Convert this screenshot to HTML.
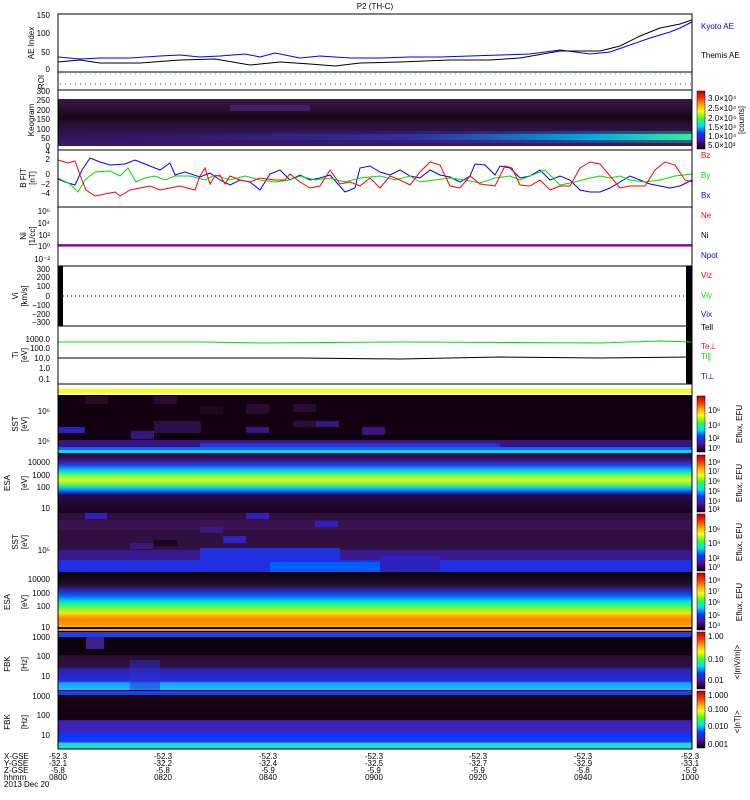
<!DOCTYPE html>
<html><head><meta charset="utf-8"><style>
html,body{margin:0;padding:0;background:#fff;width:750px;height:800px;overflow:hidden}
svg{display:block}
text{font-family:"Liberation Sans",sans-serif;font-size:8px}
</style></head><body>
<svg width="750" height="800" viewBox="0 0 750 800" xmlns="http://www.w3.org/2000/svg">
<defs>
<linearGradient id="rb" x1="0" y1="0" x2="0" y2="1">
<stop offset="0" stop-color="#c00000"/><stop offset="0.12" stop-color="#ff3000"/><stop offset="0.25" stop-color="#ffb000"/><stop offset="0.35" stop-color="#ffff00"/><stop offset="0.48" stop-color="#30ff30"/><stop offset="0.6" stop-color="#00e0ff"/><stop offset="0.72" stop-color="#0040ff"/><stop offset="0.85" stop-color="#5010a0"/><stop offset="1" stop-color="#100010"/>
</linearGradient>
<linearGradient id="esai" x1="0" y1="0" x2="0" y2="1">
<stop offset="0" stop-color="#200830"/><stop offset="0.1" stop-color="#3a1070"/><stop offset="0.2" stop-color="#2040e0"/><stop offset="0.28" stop-color="#00c0ff"/><stop offset="0.36" stop-color="#50ff60"/><stop offset="0.45" stop-color="#f0f020"/><stop offset="0.52" stop-color="#60ff50"/><stop offset="0.6" stop-color="#00b0ff"/><stop offset="0.66" stop-color="#2030d0"/><stop offset="0.72" stop-color="#301060"/><stop offset="1" stop-color="#180420"/>
</linearGradient>
<linearGradient id="esae" x1="0" y1="0" x2="0" y2="1">
<stop offset="0" stop-color="#080008"/><stop offset="0.22" stop-color="#201030"/><stop offset="0.3" stop-color="#3020a0"/><stop offset="0.4" stop-color="#0060ff"/><stop offset="0.5" stop-color="#00e0e0"/><stop offset="0.6" stop-color="#60ff40"/><stop offset="0.7" stop-color="#ffe000"/><stop offset="0.8" stop-color="#ff8000"/><stop offset="0.9" stop-color="#ffa000"/><stop offset="0.95" stop-color="#ffd000"/><stop offset="1" stop-color="#ff8000"/>
</linearGradient>
<linearGradient id="keo" x1="0" y1="0" x2="0" y2="1">
<stop offset="0" stop-color="#3a1848"/><stop offset="0.4" stop-color="#1a0818"/><stop offset="0.55" stop-color="#2a1038"/><stop offset="1" stop-color="#3a1870"/>
</linearGradient>
<linearGradient id="keob" x1="0" y1="0" x2="1" y2="0">
<stop offset="0" stop-color="#3020a0" stop-opacity="0"/><stop offset="0.55" stop-color="#3040d0" stop-opacity="0.5"/><stop offset="0.85" stop-color="#00b0e0"/><stop offset="1" stop-color="#30f0a0"/>
</linearGradient>
<linearGradient id="fbk1" x1="0" y1="0" x2="0" y2="1">
<stop offset="0" stop-color="#080008"/><stop offset="0.4" stop-color="#100010"/><stop offset="0.42" stop-color="#2a1030"/><stop offset="0.6" stop-color="#301040"/><stop offset="0.65" stop-color="#3020b0"/><stop offset="0.85" stop-color="#2030e0"/><stop offset="0.88" stop-color="#10a0ff"/><stop offset="1" stop-color="#20c0ff"/>
</linearGradient>
<linearGradient id="fbk2" x1="0" y1="0" x2="0" y2="1">
<stop offset="0" stop-color="#1c0818"/><stop offset="0.5" stop-color="#100010"/><stop offset="0.52" stop-color="#4020b0"/><stop offset="0.7" stop-color="#4020c0"/><stop offset="0.72" stop-color="#1030f0"/><stop offset="0.88" stop-color="#1040f0"/><stop offset="0.9" stop-color="#20d0e0"/><stop offset="1" stop-color="#30e0c0"/>
</linearGradient>
</defs>

<text x="375" y="9" text-anchor="middle" font-size="9">P2 (TH-C)</text>

<!-- AE panel -->
<rect x="58" y="14" width="634" height="58" fill="#fff" stroke="#000" stroke-width="1"/>
<polyline fill="none" stroke="#00f" stroke-width="1" points="58,57 80,59 100,58 130,58 160,56 180,55 200,57 220,56 245,54 260,57 275,53 300,58 320,56 350,58 380,58 410,57 440,57 470,56 500,55 530,54 560,50 590,54 610,52 630,45 650,38 670,32 680,28 692,22"/>
<polyline fill="none" stroke="#000" stroke-width="1" points="58,62 80,60 100,63 140,63 180,60 215,59 250,65 280,62 310,64 335,66 360,63 400,62 450,60 490,60 520,58 560,51 600,51 620,46 640,36 660,28 680,24 692,20"/>
<text x="50" y="18" text-anchor="end">150</text><text x="50" y="36" text-anchor="end">100</text><text x="50" y="55" text-anchor="end">50</text><text x="50" y="72" text-anchor="end">0</text>
<text x="34" y="43" text-anchor="middle" transform="rotate(-90 34 43)">AE Index</text>
<text x="701" y="29" fill="#00f">Kyoto AE</text><text x="701" y="58">Themis AE</text>

<!-- ROI -->
<rect x="58" y="72" width="634" height="18" fill="#fff" stroke="#000"/>
<line x1="60" y1="74" x2="692" y2="74" stroke="#0dd" stroke-dasharray="1,4"/>
<line x1="60" y1="84" x2="692" y2="84" stroke="#f00" stroke-dasharray="1,4"/>
<text x="44" y="82" text-anchor="middle" transform="rotate(-90 44 82)">ROI</text>

<!-- Keogram -->
<rect x="58" y="90" width="634" height="60" fill="#fff" stroke="#000"/>
<rect x="58" y="99" width="634" height="47" fill="url(#keo)"/>
<rect x="58" y="134" width="634" height="6" fill="url(#keob)"/>
<rect x="58" y="131" width="634" height="12" fill="url(#keob)" opacity="0.35"/>
<rect x="230" y="105" width="80" height="6" fill="#5030a0" opacity="0.5"/>
<text x="50" y="94" text-anchor="end">300</text><text x="50" y="103" text-anchor="end">250</text><text x="50" y="113" text-anchor="end">200</text><text x="50" y="122" text-anchor="end">150</text><text x="50" y="132" text-anchor="end">100</text><text x="50" y="141" text-anchor="end">50</text><text x="50" y="149" text-anchor="end">0</text>
<text x="34" y="120" text-anchor="middle" transform="rotate(-90 34 120)">Keogram</text>
<rect x="697" y="91" width="8" height="58" fill="url(#rb)" stroke="#000" stroke-width="0.5"/>
<text x="708" y="101" font-size="7">3.0×10⁴</text><text x="708" y="111" font-size="7">2.5×10⁴</text><text x="708" y="121" font-size="7">2.0×10⁴</text><text x="708" y="130" font-size="7">1.5×10⁴</text><text x="708" y="139" font-size="7">1.0×10⁴</text><text x="708" y="148" font-size="7">5.0×10³</text>
<text x="744" y="120" text-anchor="middle" font-size="7" transform="rotate(-90 744 120)">[counts]</text>

<!-- B field -->
<rect x="58" y="150" width="634" height="57" fill="#fff" stroke="#000"/>
<polyline fill="none" stroke="#00f" stroke-width="1" points="58,179 65,182 75,185 82,170 90,158 100,162 110,165 125,164 135,160 145,164 160,170 170,163 175,175 185,172 200,177 210,173 220,180 230,185 240,180 250,182 260,190 270,174 280,170 290,180 300,175 310,180 320,178 330,175 345,192 355,188 360,168 370,166 380,172 390,175 400,170 410,176 420,178 430,170 440,175 450,177 460,182 470,176 475,164 485,165 495,175 500,166 510,168 520,178 530,176 540,170 550,180 560,176 570,180 580,190 590,192 600,192 610,188 620,182 630,176 640,180 650,184 660,186 670,188 680,186 692,180"/>
<polyline fill="none" stroke="#0d0" stroke-width="1" points="58,178 70,184 78,192 85,180 95,172 110,171 120,176 128,168 136,182 145,178 155,176 165,180 175,176 190,176 205,180 215,175 230,180 245,176 260,180 275,182 290,180 300,176 315,180 330,178 345,182 360,178 380,176 395,180 410,176 420,182 435,180 450,178 465,180 480,183 495,178 510,176 520,180 530,176 545,170 560,185 575,182 590,178 600,176 610,178 620,176 630,180 645,182 660,180 675,176 692,174"/>
<polyline fill="none" stroke="#f00" stroke-width="1" points="58,160 68,163 75,161 80,175 86,190 95,196 105,194 115,192 120,196 130,190 140,188 150,186 160,190 170,188 180,186 195,190 200,176 205,168 210,184 215,176 220,175 225,184 230,176 240,180 250,182 260,178 275,180 285,180 290,174 300,182 310,188 320,186 330,170 340,184 350,182 360,186 370,178 380,188 390,176 400,180 410,185 420,172 430,162 440,165 450,186 460,188 470,176 480,184 495,186 505,166 512,168 520,185 530,186 540,180 550,190 560,186 570,186 580,168 590,162 600,164 610,176 620,188 630,186 645,186 655,170 665,162 675,165 685,180 692,182"/>
<text x="50" y="154" text-anchor="end">4</text><text x="50" y="162" text-anchor="end">2</text><text x="50" y="177" text-anchor="end">0</text><text x="50" y="187" text-anchor="end">−2</text><text x="50" y="196" text-anchor="end">−4</text>
<text x="26" y="178" text-anchor="middle" transform="rotate(-90 26 178)">B FIT</text><text x="35" y="178" text-anchor="middle" transform="rotate(-90 35 178)">[nT]</text>
<text x="701" y="158" fill="#f00">Bz</text><text x="701" y="178" fill="#0d0">By</text><text x="701" y="198" fill="#00f">Bx</text>

<!-- Ni -->
<rect x="58" y="207" width="634" height="59" fill="#fff" stroke="#000"/>
<line x1="58" y1="245" x2="692" y2="245" stroke="#00f" stroke-width="1.5"/>
<line x1="58" y1="246" x2="692" y2="246" stroke="#f00" stroke-width="1.2"/>
<text x="50" y="214" text-anchor="end">10⁶</text><text x="50" y="226" text-anchor="end">10⁴</text><text x="50" y="238" text-anchor="end">10²</text><text x="50" y="249" text-anchor="end">10⁰</text><text x="50" y="262" text-anchor="end">10⁻²</text>
<text x="26" y="236" text-anchor="middle" transform="rotate(-90 26 236)">Ni</text><text x="35" y="236" text-anchor="middle" transform="rotate(-90 35 236)">[1/cc]</text>
<text x="701" y="218" fill="#f00">Ne</text><text x="701" y="238">Ni</text><text x="701" y="258" fill="#00f">Npot</text>

<!-- V -->
<rect x="58" y="266" width="634" height="60" fill="#fff" stroke="#000"/>
<rect x="58" y="266" width="5" height="60" fill="#000"/><rect x="686" y="266" width="6" height="60" fill="#000"/>
<line x1="63" y1="296" x2="686" y2="296" stroke="#000" stroke-dasharray="1,3"/>
<text x="50" y="272" text-anchor="end">300</text><text x="50" y="280" text-anchor="end">200</text><text x="50" y="289" text-anchor="end">100</text><text x="50" y="299" text-anchor="end">0</text><text x="50" y="308" text-anchor="end">−100</text><text x="50" y="317" text-anchor="end">−200</text><text x="50" y="325" text-anchor="end">−300</text>
<text x="18" y="296" text-anchor="middle" transform="rotate(-90 18 296)">Vi</text><text x="27" y="296" text-anchor="middle" transform="rotate(-90 27 296)">[km/s]</text>
<text x="701" y="278" fill="#f00">Viz</text><text x="701" y="298" fill="#0d0">Viy</text><text x="701" y="317" fill="#00f">Vix</text><text x="701" y="330">Tell</text>

<!-- T -->
<rect x="58" y="326" width="634" height="58" fill="#fff" stroke="#000"/>
<rect x="686" y="326" width="6" height="58" fill="#000"/>
<polyline fill="none" stroke="#0d0" points="58,342 200,342 260,343 400,342 600,343 660,341 692,342"/>
<polyline fill="none" stroke="#000" points="58,358 300,358 400,359 500,357 600,358 692,357"/>
<text x="50" y="342" text-anchor="end">1000.0</text><text x="50" y="351" text-anchor="end">100.0</text><text x="50" y="361" text-anchor="end">10.0</text><text x="50" y="371" text-anchor="end">1.0</text><text x="50" y="382" text-anchor="end">0.1</text>
<text x="18" y="355" text-anchor="middle" transform="rotate(-90 18 355)">Ti</text><text x="27" y="355" text-anchor="middle" transform="rotate(-90 27 355)">[eV]</text>
<text x="701" y="349" fill="#f00">Te⊥</text><text x="701" y="359" fill="#0d0">Ti∥</text><text x="701" y="379" fill="#00f">Ti⊥</text>

<rect x="58" y="389" width="634" height="4" fill="#ff0"/>

<!-- SST ion -->
<rect x="58" y="395" width="634" height="58" fill="#100010"/>
<rect x="85" y="396" width="23" height="8" fill="#2a0a2a"/><rect x="154" y="396" width="23" height="8" fill="#2a0a30"/>
<rect x="200" y="406" width="23" height="8" fill="#200820"/><rect x="246" y="404" width="23" height="10" fill="#2a0a30"/><rect x="293" y="404" width="23" height="8" fill="#2a0a30"/>
<rect x="154" y="421" width="47" height="12" fill="#2a1048"/><rect x="316" y="421" width="23" height="6" fill="#3a1480"/><rect x="293" y="421" width="23" height="6" fill="#2a1040"/>
<rect x="58" y="427" width="27" height="6" fill="#3020c0"/><rect x="131" y="431" width="23" height="8" fill="#3a1480"/><rect x="246" y="427" width="23" height="6" fill="#3a1480"/><rect x="362" y="427" width="23" height="8" fill="#3a1480"/>
<rect x="58" y="440" width="634" height="8" fill="#3a1480"/><rect x="200" y="443" width="300" height="5" fill="#3030d0"/>
<rect x="58" y="447" width="634" height="6" fill="#1060ff"/><rect x="58" y="450" width="634" height="3" fill="#00e0e0"/>
<text x="50" y="414" text-anchor="end">10⁶</text><text x="50" y="444" text-anchor="end">10⁵</text>
<text x="18" y="424" text-anchor="middle" transform="rotate(-90 18 424)">SST</text><text x="27" y="424" text-anchor="middle" transform="rotate(-90 27 424)">[eV]</text>
<rect x="697" y="396" width="8" height="56" fill="url(#rb)" stroke="#000" stroke-width="0.5"/>
<text x="708" y="413" font-size="7">10⁶</text><text x="708" y="428" font-size="7">10⁴</text><text x="708" y="441" font-size="7">10²</text><text x="708" y="451" font-size="7">10⁰</text>
<text x="742" y="424" text-anchor="middle" font-size="7" transform="rotate(-90 742 424)">Eflux, EFU</text>

<!-- ESA ion -->
<rect x="58" y="453" width="634" height="60" fill="url(#esai)"/>
<rect x="58" y="494" width="634" height="19" fill="#1a0420" opacity="0.5"/>
<text x="50" y="465" text-anchor="end">10000</text><text x="50" y="478" text-anchor="end">1000</text><text x="50" y="490" text-anchor="end">100</text><text x="50" y="511" text-anchor="end">10</text>
<text x="10" y="483" text-anchor="middle" transform="rotate(-90 10 483)">ESA</text><text x="27" y="483" text-anchor="middle" transform="rotate(-90 27 483)">[eV]</text>
<rect x="697" y="455" width="8" height="57" fill="url(#rb)" stroke="#000" stroke-width="0.5"/>
<text x="708" y="465" font-size="7">10⁸</text><text x="708" y="474" font-size="7">10⁷</text><text x="708" y="484" font-size="7">10⁶</text><text x="708" y="494" font-size="7">10⁵</text><text x="708" y="504" font-size="7">10⁴</text><text x="708" y="512" font-size="7">10³</text>
<text x="742" y="483" text-anchor="middle" font-size="7" transform="rotate(-90 742 483)">Eflux, EFU</text>

<!-- SST elec -->
<rect x="58" y="513" width="634" height="59" fill="#301040"/>
<rect x="58" y="520" width="634" height="10" fill="#3a1450"/>
<rect x="85" y="513" width="22" height="6" fill="#3020c0"/><rect x="246" y="513" width="23" height="6" fill="#3020c0"/><rect x="315" y="521" width="23" height="6" fill="#3020c0"/><rect x="223" y="536" width="23" height="7" fill="#3020c0"/>
<rect x="200" y="527" width="23" height="6" fill="#3a1880"/><rect x="130" y="543" width="23" height="6" fill="#3a1880"/><rect x="154" y="540" width="23" height="6" fill="#1a0820"/>
<rect x="58" y="550" width="634" height="22" fill="#3a1890"/>
<rect x="200" y="548" width="140" height="24" fill="#2030e0"/><rect x="58" y="560" width="634" height="12" fill="#2030e0"/><rect x="270" y="562" width="120" height="10" fill="#0060ff"/><rect x="380" y="556" width="60" height="16" fill="#3020c0"/>
<text x="50" y="553" text-anchor="end">10⁵</text>
<text x="18" y="542" text-anchor="middle" transform="rotate(-90 18 542)">SST</text><text x="27" y="542" text-anchor="middle" transform="rotate(-90 27 542)">[eV]</text>
<rect x="697" y="514" width="8" height="57" fill="url(#rb)" stroke="#000" stroke-width="0.5"/>
<text x="708" y="532" font-size="7">10⁶</text><text x="708" y="546" font-size="7">10⁴</text><text x="708" y="561" font-size="7">10²</text><text x="708" y="570" font-size="7">10⁰</text>
<text x="742" y="542" text-anchor="middle" font-size="7" transform="rotate(-90 742 542)">Eflux, EFU</text>

<!-- ESA elec -->
<rect x="58" y="572" width="634" height="59" fill="url(#esae)"/>
<line x1="58" y1="628" x2="692" y2="628" stroke="#000" stroke-width="2"/>
<text x="50" y="582" text-anchor="end">10000</text><text x="50" y="596" text-anchor="end">1000</text><text x="50" y="609" text-anchor="end">100</text><text x="50" y="630" text-anchor="end">10</text>
<text x="10" y="602" text-anchor="middle" transform="rotate(-90 10 602)">ESA</text><text x="27" y="602" text-anchor="middle" transform="rotate(-90 27 602)">[eV]</text>
<rect x="697" y="573" width="8" height="57" fill="url(#rb)" stroke="#000" stroke-width="0.5"/>
<text x="708" y="583" font-size="7">10⁸</text><text x="708" y="594" font-size="7">10⁷</text><text x="708" y="605" font-size="7">10⁶</text><text x="708" y="618" font-size="7">10⁵</text><text x="708" y="628" font-size="7">10⁴</text>
<text x="742" y="602" text-anchor="middle" font-size="7" transform="rotate(-90 742 602)">Eflux, EFU</text>

<!-- FBK 1 -->
<rect x="58" y="631" width="634" height="59" fill="url(#fbk1)"/>
<rect x="58" y="632" width="634" height="5" fill="#1a40f0"/>
<rect x="86" y="637" width="18" height="12" fill="#402090"/><rect x="130" y="660" width="30" height="30" fill="#2a30d0" opacity="0.5"/>
<text x="50" y="640" text-anchor="end">1000</text><text x="50" y="659" text-anchor="end">100</text><text x="50" y="679" text-anchor="end">10</text>
<text x="10" y="664" text-anchor="middle" transform="rotate(-90 10 664)">FBK</text><text x="27" y="664" text-anchor="middle" transform="rotate(-90 27 664)">[Hz]</text>
<rect x="697" y="632" width="8" height="57" fill="url(#rb)" stroke="#000" stroke-width="0.5"/>
<text x="708" y="639" font-size="7">1.00</text><text x="708" y="662" font-size="7">0.10</text><text x="708" y="683" font-size="7">0.01</text>
<text x="740" y="662" text-anchor="middle" font-size="7" transform="rotate(-90 740 662)">&lt;|mV/m|&gt;</text>

<!-- FBK 2 -->
<rect x="58" y="690" width="634" height="59" fill="url(#fbk2)"/>
<rect x="58" y="691" width="634" height="4" fill="#1a40f0"/>
<text x="50" y="699" text-anchor="end">1000</text><text x="50" y="718" text-anchor="end">100</text><text x="50" y="738" text-anchor="end">10</text>
<text x="10" y="722" text-anchor="middle" transform="rotate(-90 10 722)">FBK</text><text x="27" y="722" text-anchor="middle" transform="rotate(-90 27 722)">[Hz]</text>
<rect x="697" y="691" width="8" height="57" fill="url(#rb)" stroke="#000" stroke-width="0.5"/>
<text x="708" y="698" font-size="7">1.000</text><text x="708" y="712" font-size="7">0.100</text><text x="708" y="729" font-size="7">0.010</text><text x="708" y="747" font-size="7">0.001</text>
<text x="740" y="722" text-anchor="middle" font-size="7" transform="rotate(-90 740 722)">&lt;|nT|&gt;</text>

<rect x="58" y="14" width="634" height="735" fill="none" stroke="#000"/>

<!-- Bottom labels -->
<g font-size="8">
<text x="4" y="759">X-GSE</text><text x="4" y="766">Y-GSE</text><text x="4" y="773">Z-GSE</text><text x="4" y="780">hhmm</text><text x="4" y="787">2013 Dec 20</text>
<g text-anchor="middle">
<text x="58" y="759">-52.3</text><text x="58" y="766">-32.1</text><text x="58" y="773">-5.8</text><text x="58" y="780">0800</text>
<text x="163" y="759">-52.3</text><text x="163" y="766">-32.2</text><text x="163" y="773">-5.8</text><text x="163" y="780">0820</text>
<text x="268" y="759">-52.3</text><text x="268" y="766">-32.4</text><text x="268" y="773">-5.9</text><text x="268" y="780">0840</text>
<text x="374" y="759">-52.3</text><text x="374" y="766">-32.5</text><text x="374" y="773">-5.9</text><text x="374" y="780">0900</text>
<text x="478" y="759">-52.3</text><text x="478" y="766">-32.7</text><text x="478" y="773">-5.9</text><text x="478" y="780">0920</text>
<text x="583" y="759">-52.3</text><text x="583" y="766">-32.9</text><text x="583" y="773">-5.8</text><text x="583" y="780">0940</text>
<text x="690" y="759">-52.3</text><text x="690" y="766">-33.1</text><text x="690" y="773">-5.9</text><text x="690" y="780">1000</text>
</g></g>
</svg>
</body></html>
